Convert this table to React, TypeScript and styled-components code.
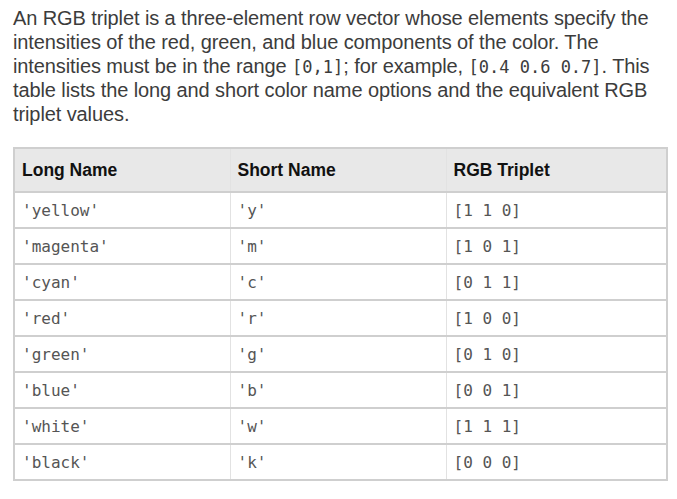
import React from "react";
import styled, { createGlobalStyle } from "styled-components";

const Global = createGlobalStyle`
  html, body { margin: 0; padding: 0; background: #ffffff; }
`;

const Page = styled.div`
  padding: 6px 8px 0 13px;
  font-family: "Liberation Sans", Arial, sans-serif;
  color: #3c3c3c;
`;

const Para = styled.p`
  margin: 0 0 21px 0;
  font-size: 20px;
  line-height: 24px;
  letter-spacing: -0.1px;
`;

const Code = styled.code`
  font-family: "DejaVu Sans Mono", monospace;
  font-size: 17px;
  line-height: 1;
  letter-spacing: 0;
`;

const Table = styled.table`
  width: 653px;
  border-collapse: collapse;
  border: 2px solid #cfcfcf;
  table-layout: fixed;
`;

const Col = styled.col<{ $w: number }>`
  width: ${(p) => p.$w}px;
`;

const Th = styled.th`
  box-sizing: border-box;
  background: #e8e8e8;
  text-align: left;
  font-family: "Liberation Sans", Arial, sans-serif;
  font-weight: bold;
  font-size: 17.5px;
  color: #111;
  height: 44px;
  padding: 0 0 0 7px;
  border-left: 1px solid #e2e2e2;
  border-bottom: 2px solid #cfcfcf;
`;

const Td = styled.td`
  box-sizing: border-box;
  font-family: "DejaVu Sans Mono", monospace;
  font-size: 16px;
  color: #555;
  height: 36px;
  padding: 0 0 0 7px;
  border-left: 1px solid #e2e2e2;
  border-bottom: 2px solid #cfcfcf;
`;

const rows: [string, string, string][] = [
  ["'yellow'", "'y'", "[1 1 0]"],
  ["'magenta'", "'m'", "[1 0 1]"],
  ["'cyan'", "'c'", "[0 1 1]"],
  ["'red'", "'r'", "[1 0 0]"],
  ["'green'", "'g'", "[0 1 0]"],
  ["'blue'", "'b'", "[0 0 1]"],
  ["'white'", "'w'", "[1 1 1]"],
  ["'black'", "'k'", "[0 0 0]"],
];

export default function App() {
  return (
    <Page>
      <Global />
      <Para>
        An RGB triplet is a three-element row vector whose elements specify the
        intensities of the red, green, and blue components of the color. The
        intensities must be in the range <Code>[0,1]</Code>; for example,{" "}
        <Code>[0.4 0.6 0.7]</Code>. This table lists the long and short color
        name options and the equivalent RGB triplet values.
      </Para>
      <Table>
        <colgroup>
          <Col $w={216} />
          <Col $w={216} />
          <Col $w={221} />
        </colgroup>
        <thead>
          <tr>
            <Th>Long Name</Th>
            <Th>Short Name</Th>
            <Th>RGB Triplet</Th>
          </tr>
        </thead>
        <tbody>
          {rows.map((r) => (
            <tr key={r[0]}>
              <Td>{r[0]}</Td>
              <Td>{r[1]}</Td>
              <Td>{r[2]}</Td>
            </tr>
          ))}
        </tbody>
      </Table>
    </Page>
  );
}
